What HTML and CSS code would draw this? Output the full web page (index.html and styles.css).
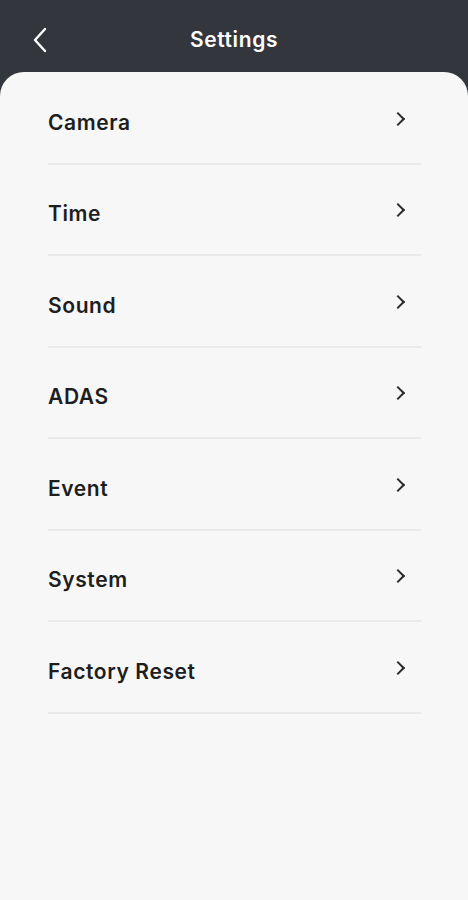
FILE: index.html
```html
<!DOCTYPE html>
<html lang="en">
  <head>
    <meta charset="UTF-8" />
    <meta name="viewport" content="width=device-width, initial-scale=1.0" />
    <title>Settings</title>
    <link rel="stylesheet" href="styles.css">
  </head>
  <body>
    <div class="app">
      <header class="topbar">
        <button class="back" aria-label="Back">
          <svg width="16" height="26" viewBox="0 0 16 26">
            <path d="M13 2 L3 13 L13 24" fill="none" stroke="#fff" stroke-width="2.4" stroke-linecap="round" stroke-linejoin="round" />
          </svg>
        </button>
        <h1>Settings</h1>
      </header>
      <main class="sheet">
        <ul class="menu">
          <li><span>Camera</span><i class="chev"></i></li>
          <li><span>Time</span><i class="chev"></i></li>
          <li><span>Sound</span><i class="chev"></i></li>
          <li><span>ADAS</span><i class="chev"></i></li>
          <li><span>Event</span><i class="chev"></i></li>
          <li><span>System</span><i class="chev"></i></li>
          <li><span>Factory Reset</span><i class="chev"></i></li>
        </ul>
      </main>
    </div>
  </body>
</html>
```

FILE: styles.css
```css
* {
  box-sizing: border-box;
}

body {
  margin: 0;
  background: #33363d;
  font-family: Inter, "Noto Sans", sans-serif;
}

.app {
  display: flex;
  flex-direction: column;
  min-height: 900px;
}

.topbar {
  position: relative;
  height: 72px;
  display: flex;
  align-items: center;
  justify-content: center;
  padding-top: 6px;
}

.topbar h1 {
  margin: 0;
  color: #fff;
  font-size: 21px;
  font-weight: 600;
  letter-spacing: 0.6px;
}

.back {
  position: absolute;
  left: 32px;
  top: 27px;
  background: none;
  border: none;
  padding: 0;
  cursor: pointer;
}

.sheet {
  flex: 1;
  background: #f7f7f7;
  border-radius: 24px 24px 0 0;
  padding: 1px 47px 0 48px;
}

.menu {
  list-style: none;
  margin: 0;
  padding: 0;
}

.menu li {
  height: 91.5px;
  display: flex;
  align-items: center;
  justify-content: space-between;
  padding-top: 9px;
  border-bottom: 2px solid #e9e9e9;
  font-size: 21px;
  font-weight: 600;
  letter-spacing: 0.6px;
  color: #1e1e1e;
}

.chev {
  width: 10px;
  height: 10px;
  border-top: 2px solid #2a2a2a;
  border-right: 2px solid #2a2a2a;
  transform: rotate(45deg);
  margin: 0 18px 7px 0;
}
```
